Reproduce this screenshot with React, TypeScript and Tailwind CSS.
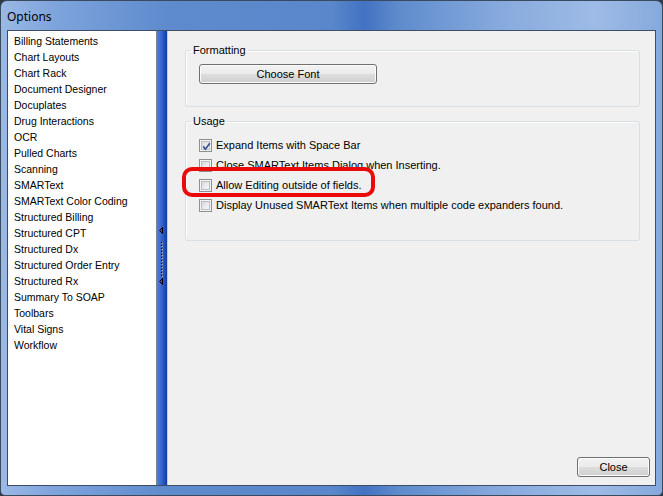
import React from 'react';

const sections = [
  'Billing Statements',
  'Chart Layouts',
  'Chart Rack',
  'Document Designer',
  'Docuplates',
  'Drug Interactions',
  'OCR',
  'Pulled Charts',
  'Scanning',
  'SMARText',
  'SMARText Color Coding',
  'Structured Billing',
  'Structured CPT',
  'Structured Dx',
  'Structured Order Entry',
  'Structured Rx',
  'Summary To SOAP',
  'Toolbars',
  'Vital Signs',
  'Workflow',
];

function Checkbox({ checked }: { checked?: boolean }) {
  return (
    <span className="relative flex h-[13px] w-[13px] shrink-0 border border-[#8e8f8f] bg-[#f4f4f4] p-[1px]">
      <span className="h-full w-full border border-[#b9bec4] bg-[linear-gradient(135deg,#d4d8dd_0%,#e8eaec_50%,#f8f8f8_100%)]" />
      {checked && (
        <svg className="absolute inset-0" width="13" height="13" viewBox="0 0 13 13">
          <path d="M3.2 6.4 L5.4 9.2 L9.8 3.2" fill="none" stroke="#3b4f8f" strokeWidth="1.7" />
        </svg>
      )}
    </span>
  );
}

function WinButton({ label, className }: { label: string; className: string }) {
  return (
    <button
      className={
        'h-[20px] rounded-[3px] border border-[#707070] bg-[linear-gradient(#f2f2f2_0%,#ebebeb_50%,#dddddd_50%,#cfcfcf_100%)] text-[11px] leading-none text-black shadow-[inset_0_0_0_1px_#fbfbfb] ' +
        className
      }
    >
      {label}
    </button>
  );
}

function Arrow() {
  return (
    <svg width="5" height="7" viewBox="0 0 5 7" className="ml-[2px] self-start">
      <path d="M3.5 0.5 L0.5 3.5 L3.5 6.5 Z" fill="#2c4fb8" stroke="#000" strokeWidth="1" />
    </svg>
  );
}

export default function App() {
  const dots = Array.from({ length: 12 }, (_, i) => i);

  return (
    <div className="h-[496px] w-[663px] overflow-hidden bg-[#2f3a48] font-['Liberation_Sans',Arial,sans-serif]">
      <div className="flex h-[496px] w-[663px] flex-col rounded-t-[7px] rounded-b-[5px] border border-[#3a4a60] bg-[linear-gradient(90deg,#9ab9e5_0%,#7ea4dc_8%,#5e8bcd_25%,#5a87cb_50%,#4273c2_55%,#5e8bcd_60%,#86a9dd_75%,#9dbbe5_90%,#86a9dd_100%)]">
        {/* Title bar */}
        <div className="flex h-[29px] items-center pl-[6px] pt-[2px] font-['Noto_Sans',sans-serif] text-[12px] text-black">
          Options
        </div>

        {/* Client area */}
        <div className="ml-[6px] flex h-[456px] w-[649px] border border-[#3e4d63] bg-[#f0f0f0]">
          {/* Section list */}
          <div className="w-[148px] shrink-0 bg-white pl-[6px] pt-[2px] text-[10.5px] text-black">
            {sections.map((s) => (
              <div key={s} className="h-[16px] leading-[16px] whitespace-nowrap">
                {s}
              </div>
            ))}
          </div>
          <div className="w-px shrink-0 bg-[#7d8590]" />

          {/* Splitter */}
          <div className="flex w-[10px] shrink-0 flex-col items-center bg-[linear-gradient(90deg,#4f80dc_0%,#3062cc_50%,#133aa6_100%)] pt-[196px]">
            <Arrow />
            <svg width="4" height="36" viewBox="0 0 4 36" className="mt-[8px]">
              {dots.map((i) => (
                <g key={i}>
                  <rect x="1" y={i * 3} width="2" height="2" fill="#dfe8f8" />
                  <rect x="1" y={i * 3} width="1.5" height="1.5" fill="#000" />
                </g>
              ))}
            </svg>
            <Arrow />
          </div>

          {/* Settings panel */}
          <div className="flex flex-1 flex-col border-l border-[#c8ced6] pl-[17px] pt-[12px] text-[11px] text-black">
            <fieldset className="mr-[15px] rounded-[3px] border border-[#d5dfe5] shadow-[inset_1px_1px_0_#fff]">
              <legend className="ml-[5px] px-[2px] leading-[14px]">Formatting</legend>
              <div className="pl-[13px] pt-[7px] pb-[22px]">
                <WinButton label="Choose Font" className="w-[178px]" />
              </div>
            </fieldset>

            <fieldset className="mr-[15px] mt-[7px] rounded-[3px] border border-[#d5dfe5] shadow-[inset_1px_1px_0_#fff]">
              <legend className="ml-[5px] px-[2px] leading-[14px]">Usage</legend>
              <div className="pl-[13px] pt-[7px] pb-[25px]">
                <label className="flex h-[20px] items-center gap-[4px]">
                  <Checkbox checked />
                  <span>Expand Items with Space Bar</span>
                </label>
                <label className="flex h-[20px] items-center gap-[4px]">
                  <Checkbox />
                  <span>Close SMARText Items Dialog when Inserting.</span>
                </label>
                <label className="relative flex h-[20px] items-center gap-[4px]">
                  <Checkbox />
                  <span>Allow Editing outside of fields.</span>
                  <span className="pointer-events-none absolute left-[-17px] top-[-8px] h-[30px] w-[193px] rounded-[10px] border-[4px] border-[#ea0a0a]" />
                </label>
                <label className="flex h-[20px] items-center gap-[4px]">
                  <Checkbox />
                  <span>Display Unused SMARText Items when multiple code expanders found.</span>
                </label>
              </div>
            </fieldset>

            <div className="flex-1" />
            <div className="flex justify-end pb-[8px] pr-[5px]">
              <WinButton label="Close" className="w-[73px]" />
            </div>
          </div>
        </div>
      </div>
    </div>
  );
}
